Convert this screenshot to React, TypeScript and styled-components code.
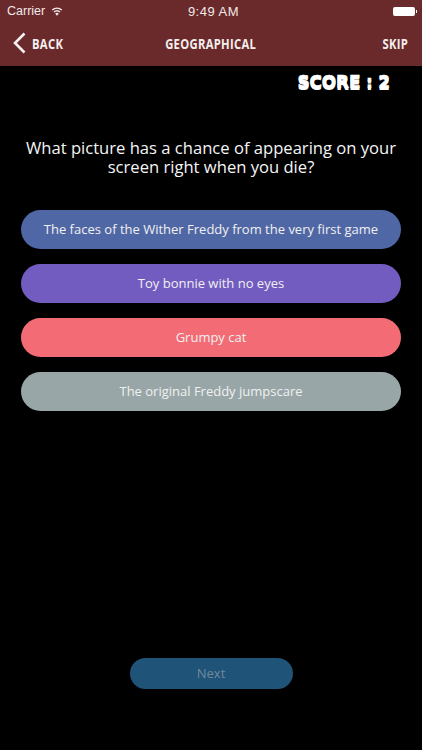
import React from 'react';
import styled, { createGlobalStyle } from 'styled-components';

const GlobalStyle = createGlobalStyle`
    html, body {
        margin: 0;
        padding: 0;
        background: #000;
    }
`;

const Screen = styled.div`
    width: 422px;
    height: 750px;
    display: flex;
    flex-direction: column;
    background: #000;
    color: #fff;
    overflow: hidden;
    font-family: 'Open Sans', 'Noto Sans', sans-serif;
`;

const Header = styled.header`
    height: 66px;
    flex: none;
    background: #6a2a2b;
    display: flex;
    flex-direction: column;
`;

const StatusBar = styled.div`
    height: 22px;
    display: grid;
    grid-template-columns: 1fr auto 1fr;
    align-items: center;
    padding: 0 4px 0 7px;
    font-family: 'Liberation Sans', sans-serif;
    font-size: 13px;
    color: #f1e9e9;
`;

const Carrier = styled.div`
    display: flex;
    align-items: center;
    gap: 6px;
    font-size: 12.5px;
`;

const Clock = styled.span`
    letter-spacing: 0.5px;
    padding-left: 2px;
`;

const Battery = styled.div`
    justify-self: end;
    width: 22px;
    height: 9px;
    margin-right: 3px;
    border-radius: 2px;
    background: #fff;
    position: relative;

    &::after {
        content: '';
        position: absolute;
        right: -2px;
        top: 3px;
        width: 1px;
        height: 3px;
        background: #fff;
    }
`;

const NavBar = styled.nav`
    height: 44px;
    box-sizing: border-box;
    display: grid;
    grid-template-columns: 1fr auto 1fr;
    align-items: center;
    padding: 0 14px 2px 13px;
`;

const NavText = styled.span<{ $origin?: string }>`
    display: inline-block;
    font-family: 'Open Sans', sans-serif;
    font-weight: 700;
    font-size: 15px;
    letter-spacing: 0.4px;
    color: #f4eeee;
    text-transform: uppercase;
    transform: scaleX(0.75);
    transform-origin: ${(p) => p.$origin || 'center'};
`;

const BackLink = styled.div`
    display: flex;
    align-items: center;
    gap: 6px;
`;

const SkipLink = styled(NavText)`
    justify-self: end;
`;

const ScoreRow = styled.div`
    display: flex;
    justify-content: flex-end;
    padding: 4px 32px 0 0;
    height: 28px;
    box-sizing: border-box;
`;

const Score = styled.span`
    font-family: 'DejaVu Sans', sans-serif;
    font-weight: 700;
    font-size: 17px;
    line-height: 24px;
    letter-spacing: -0.2px;
    -webkit-text-stroke: 0.5px #fff;
    text-shadow: 0 2px 0 #fff;
    white-space: pre;
`;

const Question = styled.h1`
    margin: 44px 21px 0;
    font-size: 16.6px;
    font-weight: 400;
    line-height: 19px;
    text-align: center;
    color: #f5f5f5;
`;

const Options = styled.div`
    display: flex;
    flex-direction: column;
    gap: 15px;
    margin: 34px 21px 0;
`;

const Option = styled.button<{ $color: string }>`
    height: 39px;
    border: 0;
    border-radius: 20px;
    padding: 0 0 2px;
    background: ${(p) => p.$color};
    color: #f0f0f0;
    font-family: inherit;
    font-size: 13px;
    text-align: center;
`;

const Footer = styled.div`
    margin-top: auto;
    padding-bottom: 61px;
    display: flex;
    justify-content: center;
`;

const NextButton = styled.button`
    width: 163px;
    height: 31px;
    border: 0;
    border-radius: 16px;
    padding: 0 0 2px;
    background: #1f5378;
    color: #72899a;
    font-family: inherit;
    font-size: 13px;
`;

const options = [
    { text: 'The faces of the Wither Freddy from the very first game', color: '#5067a5' },
    { text: 'Toy bonnie with no eyes', color: '#735cc0' },
    { text: 'Grumpy cat', color: '#f36c75' },
    { text: 'The original Freddy jumpscare', color: '#98a6a7' },
];

export default function App() {
    return (
        <Screen>
            <GlobalStyle />
            <Header>
                <StatusBar>
                    <Carrier>
                        Carrier
                        <svg width="12" height="9" viewBox="0 0 14 10" fill="#f1e9e9">
                            <path d="M7 10 4.9 7.5a3.2 3.2 0 0 1 4.2 0z" />
                            <path d="M3.9 6.3 2.9 5.1a6.3 6.3 0 0 1 8.2 0l-1 1.2a4.8 4.8 0 0 0-6.2 0z" />
                            <path d="M1.9 3.9.9 2.7a9.4 9.4 0 0 1 12.2 0l-1 1.2a7.9 7.9 0 0 0-10.2 0z" />
                        </svg>
                    </Carrier>
                    <Clock>9:49 AM</Clock>
                    <Battery />
                </StatusBar>
                <NavBar>
                    <BackLink>
                        <svg width="13" height="22" viewBox="0 0 13 22" fill="none" stroke="#f6f0f0" strokeWidth="2.6">
                            <path d="M11.5 1.5 2 11l9.5 9.5" />
                        </svg>
                        <NavText $origin="left">Back</NavText>
                    </BackLink>
                    <NavText>Geographical</NavText>
                    <SkipLink $origin="right">Skip</SkipLink>
                </NavBar>
            </Header>
            <ScoreRow>
                <Score>SCORE : 2</Score>
            </ScoreRow>
            <Question>What picture has a chance of appearing on your screen right when you die?</Question>
            <Options>
                {options.map((o) => (
                    <Option key={o.text} $color={o.color}>
                        {o.text}
                    </Option>
                ))}
            </Options>
            <Footer>
                <NextButton>Next</NextButton>
            </Footer>
        </Screen>
    );
}
